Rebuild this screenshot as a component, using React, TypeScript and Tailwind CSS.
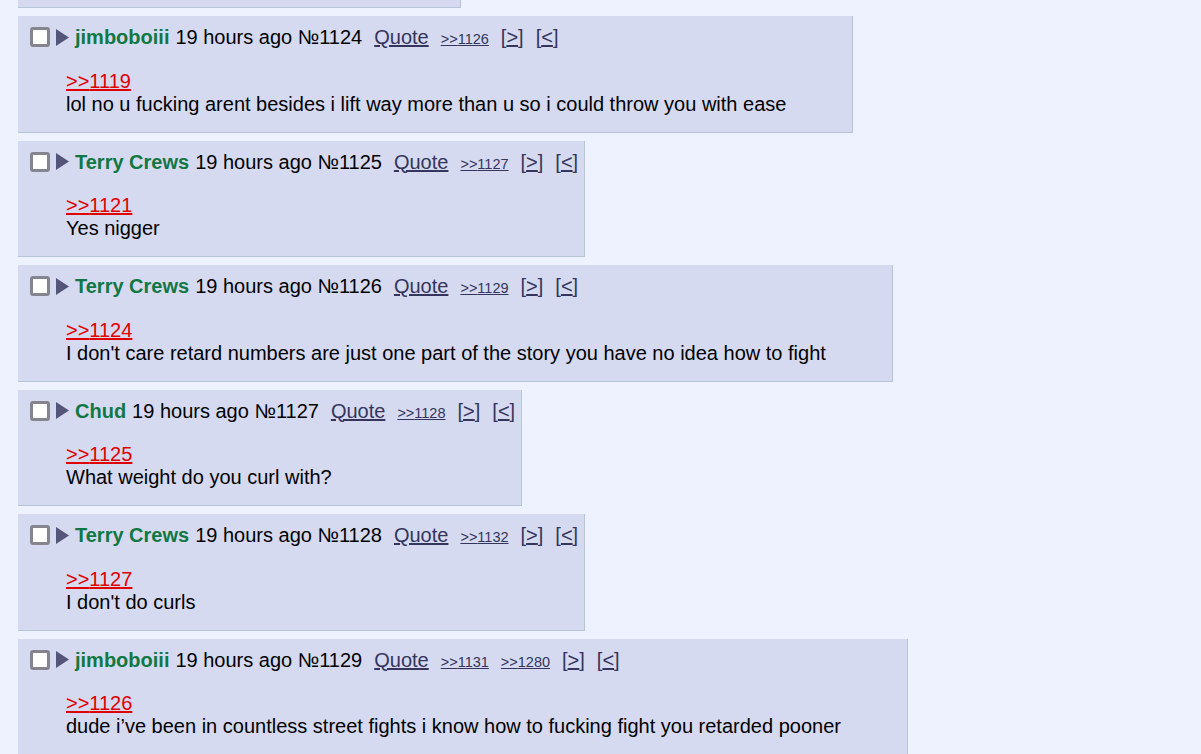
import React from "react";

interface Post {
  name: string;
  no: number;
  replies: number[];
  quote: number;
  text: string;
}

const posts: Post[] = [
  { name: "jimboboiii", no: 1124, replies: [1126], quote: 1119, text: "lol no u fucking arent besides i lift way more than u so i could throw you with ease" },
  { name: "Terry Crews", no: 1125, replies: [1127], quote: 1121, text: "Yes nigger" },
  { name: "Terry Crews", no: 1126, replies: [1129], quote: 1124, text: "I don't care retard numbers are just one part of the story you have no idea how to fight" },
  { name: "Chud", no: 1127, replies: [1128], quote: 1125, text: "What weight do you curl with?" },
  { name: "Terry Crews", no: 1128, replies: [1132], quote: 1127, text: "I don't do curls" },
  { name: "jimboboiii", no: 1129, replies: [1131, 1280], quote: 1126, text: "dude i\u2019ve been in countless street fights i know how to fucking fight you retarded pooner" },
];

function PostBox({ post }: { post: Post }) {
  return (
    <div className="mb-[8px] w-fit border-r border-b border-[#b7c5d9] bg-[#d6daf0] pt-[9px] pb-[15.5px]">
      <div className="flex h-[24px] items-baseline whitespace-nowrap pr-[6px] pl-[12px] leading-[24px]">
        <span className="mr-[6px] box-border h-[20px] w-[20px] self-center rounded-[3px] border-[3px] border-[#85858f] bg-white" />
        <svg width="13" height="17" viewBox="0 0 13 17" className="mr-[6px] self-center">
          <polygon points="0,0 13,8.5 0,17" fill="#55557a" />
        </svg>
        <span className="font-bold text-[#117743]">{post.name}</span>
        <span className="ml-[6px]">19 hours ago №{post.no}</span>
        <a className="ml-[12px] text-[#34345c] underline">Quote</a>
        {post.replies.map((r) => (
          <a key={r} className="ml-[12px] text-[14.5px] text-[#34345c] underline">
            &gt;&gt;{r}
          </a>
        ))}
        <span className="ml-[12px] text-[#34345c]">
          [<span className="underline">&gt;</span>]
        </span>
        <span className="ml-[12px] text-[#34345c]">
          [<span className="underline">&lt;</span>]
        </span>
      </div>
      <div className="mt-[20.5px] mr-[66px] ml-[48px] leading-[23.25px]">
        <a className="block w-fit text-[#e00000] underline">&gt;&gt;{post.quote}</a>
        <div className="whitespace-nowrap">{post.text}</div>
      </div>
    </div>
  );
}

export default function App() {
  return (
    <div className="min-h-[754px] overflow-hidden bg-[#eef2ff] pl-[18px] font-['Liberation_Sans',Arial,sans-serif] text-[20px] text-black">
      <div className="mb-[8px] h-[8px] w-[443px] border-r border-b border-[#b7c5d9] bg-[#d6daf0]" />
      {posts.map((p) => (
        <PostBox key={p.no} post={p} />
      ))}
    </div>
  );
}
